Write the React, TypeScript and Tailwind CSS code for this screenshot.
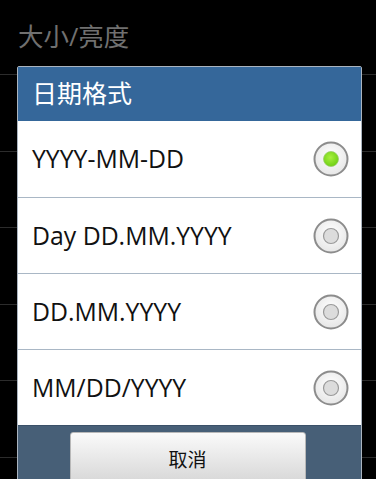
import React from "react";

const options = ["YYYY-MM-DD", "Day DD.MM.YYYY", "DD.MM.YYYY", "MM/DD/YYYY"];

function Radio({ checked }: { checked: boolean }) {
  return (
    <svg width="36" height="36" viewBox="0 0 36 36">
      <defs>
        <radialGradient id="rg-outer" cx="50%" cy="40%" r="60%">
          <stop offset="0%" stopColor="#ffffff" />
          <stop offset="100%" stopColor="#e6e6e6" />
        </radialGradient>
        <radialGradient id="rg-green" cx="45%" cy="40%" r="60%">
          <stop offset="0%" stopColor="#a8f040" />
          <stop offset="100%" stopColor="#6fd013" />
        </radialGradient>
      </defs>
      <circle cx="18" cy="18" r="16.5" fill="url(#rg-outer)" stroke="#8c8c8c" strokeWidth="2" />
      {checked ? (
        <circle cx="18" cy="18" r="7.5" fill="url(#rg-green)" stroke="#9ccc70" strokeWidth="0.8" />
      ) : (
        <circle cx="18" cy="18" r="7.5" fill="#dcdcdc" stroke="#9a9a9a" strokeWidth="1.2" />
      )}
    </svg>
  );
}

export default function App() {
  const bgRows = [0, 1, 2, 3, 4, 5];
  return (
    <div
      className="relative w-[376px] h-[479px] overflow-hidden bg-black"
      style={{ fontFamily: '"Open Sans", "Noto Sans CJK SC", sans-serif' }}
    >
      {/* underlying settings list */}
      <div className="flex flex-col">
        <div className="h-[75px] flex items-center pl-[18px] pb-[2px] border-b border-[#2c2c2c] text-[25.5px] text-[#707070]">
          大小/亮度
        </div>
        {bgRows.map((i) => (
          <div key={i} className="h-[76.5px] border-b border-[#2c2c2c]" />
        ))}
      </div>

      {/* dialog */}
      <div className="absolute left-[17px] top-[66px] w-[345px] border border-[#aab4bf] rounded-t-[2px] flex flex-col">
        <div className="h-[54px] bg-[#35679a] flex items-center pl-[14px] text-[25px] text-white">
          日期格式
        </div>
        <div className="bg-white flex flex-col">
          {options.map((o, i) => (
            <div
              key={o}
              className={
                "h-[76px] flex items-center justify-between pl-[14px] pr-[12px] " +
                (i > 0 ? "border-t border-[#a9b7c5]" : "")
              }
            >
              <span className="text-[24.8px] text-[#111]">{o}</span>
              <Radio checked={i === 0} />
            </div>
          ))}
        </div>
        <div className="h-[60px] bg-[#475f77] border-t border-[#3a5068] flex justify-center pt-[6px] pr-[4px]">
          <button className="w-[236px] h-[56px] rounded-[3px] bg-gradient-to-b from-[#fafafa] to-[#d4d4d4] border border-[#b8b8b8] text-[19px] text-[#111] flex items-start justify-center pt-[13px]">
            取消
          </button>
        </div>
      </div>
    </div>
  );
}
